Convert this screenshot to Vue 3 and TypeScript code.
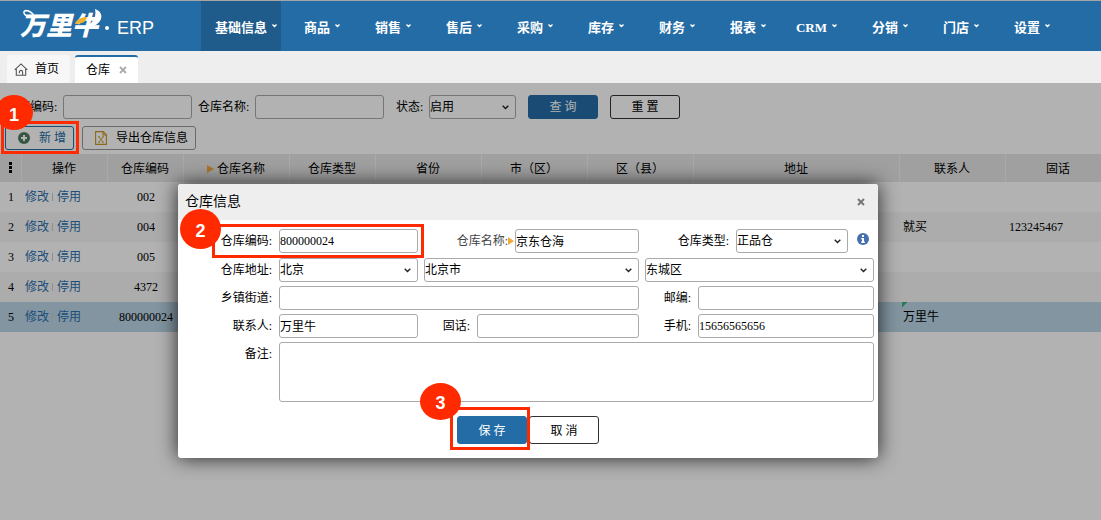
<script setup lang="ts">
import { reactive, ref } from 'vue'

interface Row {
  code: string
  contact: string
  phone: string
}

const menu = ['基础信息', '商品', '销售', '售后', '采购', '库存', '财务', '报表', 'CRM', '分销', '门店', '设置']
const columns = ['操作', '仓库编码', '仓库名称', '仓库类型', '省份', '市（区）', '区（县）', '地址', '联系人', '固话']
const rows: Row[] = [
  { code: '002', contact: '', phone: '' },
  { code: '004', contact: '就买', phone: '123245467' },
  { code: '005', contact: '', phone: '' },
  { code: '4372', contact: '', phone: '' },
  { code: '800000024', contact: '万里牛', phone: '' },
]
const selected = ref(4)
const filter = reactive({ code: '', name: '', status: '启用' })
const form = reactive({
  code: '800000024',
  name: '京东仓海',
  type: '正品仓',
  province: '北京',
  city: '北京市',
  district: '东城区',
  street: '',
  zip: '',
  contact: '万里牛',
  phone: '',
  mobile: '15656565656',
  note: '',
})
</script>

<template>
  <div class="app">
    <header class="topbar">
      <a class="logo" href="#">
        <span class="brand">万里牛</span>
        <svg class="swoosh" width="90" height="32" viewBox="0 0 90 32" aria-hidden="true">
          <path d="M14 7C11 1 3 0 4 4c1 3 5 4 9 4" fill="none" stroke="#fff" stroke-width="1.6" />
          <path d="M75 0c9 3 9 13-3 18-4 1-7 1-9 0 9-2 14-9 12-18z" fill="#fff" />
          <path d="M55 15c2-5 6-7 12-7-1 5-5 7-12 7z" fill="#efb02e" />
        </svg>
        <span class="dot"></span>
        <span class="product">ERP</span>
      </a>
      <nav class="menu">
        <a v-for="(item, i) in menu" :key="item" href="#" class="menu-item" :class="{ active: i === 0 }">
          {{ item }}
          <svg width="5" height="4" viewBox="0 0 5 4" aria-hidden="true">
            <path d="M.5.5l2 2 2-2" fill="none" stroke="#fff" stroke-width="1.4" />
          </svg>
        </a>
      </nav>
    </header>

    <div class="tabs">
      <button type="button" class="tab home">
        <svg width="14" height="13" viewBox="0 0 14 13" fill="none" stroke="#555" stroke-width="1.1" aria-hidden="true">
          <path d="M.7 6.9L7 .9l6.3 6M2.3 5.9v6.3h9.4V5.9M5.4 10.2V9a1.6 1.6 0 0 1 3.2 0v3" />
        </svg>
        首页
      </button>
      <button type="button" class="tab current">
        仓库
        <svg width="8" height="8" viewBox="0 0 8 8" aria-hidden="true">
          <path d="M1 1l6 6M7 1L1 7" stroke="#aaa" stroke-width="1.8" />
        </svg>
      </button>
    </div>

    <main class="main">
      <form class="filters" @submit.prevent>
        <label class="flabel" for="f-code">仓库编码:</label>
        <input id="f-code" v-model="filter.code" class="field w129" type="text" />
        <label class="flabel" for="f-name">仓库名称:</label>
        <input id="f-name" v-model="filter.name" class="field w129" type="text" />
        <label class="flabel status" for="f-status">状态:</label>
        <span class="select w87">
          <select id="f-status" v-model="filter.status" class="field"><option>启用</option></select>
          <svg width="7" height="5" viewBox="0 0 7 5"><path d="M.7.7l2.8 2.8L6.3.7" /></svg>
        </span>
        <button type="submit" class="btn primary">查 询</button>
        <button type="reset" class="btn">重 置</button>
      </form>

      <div class="tools">
        <button type="button" class="tool add">
          <svg width="12" height="12" viewBox="0 0 12 12" aria-hidden="true">
            <circle cx="6" cy="6" r="6" fill="#4f7d60" />
            <path d="M6 3v6M3 6h6" stroke="#fff" stroke-width="2" />
          </svg>
          新 增
        </button>
        <button type="button" class="tool export">
          <svg width="12" height="14" viewBox="0 0 12 14" fill="none" stroke="#c99422" aria-hidden="true">
            <path d="M.6.6h7.6l3.2 3.2v9.6H.6zM8 .6V4h3.4" stroke-width="1.1" />
            <path d="M4 6l4 5M8 6l-4 5M3 5.8h2M7 5.8h2M3 11.2h2M7 11.2h2" stroke-width=".9" />
          </svg>
          导出仓库信息
        </button>
      </div>

      <div class="grid">
        <table>
          <colgroup>
            <col class="c22" /><col class="c86" /><col class="c76" /><col class="c106" /><col class="c86" />
            <col class="c106" /><col class="c106" /><col class="c106" /><col class="c206" /><col class="c106" /><col />
          </colgroup>
          <thead>
            <tr>
              <th>
                <svg class="dots" width="3" height="11" viewBox="0 0 3 11" aria-hidden="true">
                  <path d="M0 0h3v3H0zM0 4h3v3H0zM0 8h3v3H0z" />
                </svg>
              </th>
              <th v-for="(c, i) in columns" :key="c"><i v-if="i === 2" class="marker"></i>{{ c }}</th>
            </tr>
          </thead>
          <tbody>
            <tr v-for="(r, i) in rows" :key="r.code" :class="{ selected: i === selected }" @click="selected = i">
              <td>{{ i + 1 }}</td>
              <td class="ops"><a href="#">修改</a><i></i><a href="#">停用</a></td>
              <td>{{ r.code }}</td>
              <td></td><td></td><td></td><td></td><td></td><td></td>
              <td class="left" :class="{ edited: i === 4 }">{{ r.contact }}</td>
              <td class="left">{{ r.phone }}</td>
            </tr>
          </tbody>
        </table>
      </div>

      <div class="backdrop"></div>

      <section class="dialog" role="dialog" aria-labelledby="dlg-title">
        <div class="dialog-head">
          <h2 id="dlg-title">仓库信息</h2>
          <button type="button" class="close" aria-label="关闭">
            <svg width="8" height="8" viewBox="0 0 8 8"><path d="M1 1l6 6M7 1L1 7" stroke="#777" stroke-width="2" /></svg>
          </button>
        </div>
        <form class="dialog-body" @submit.prevent>
          <div class="row">
            <label class="l101" for="d-code">仓库编码:</label>
            <input id="d-code" v-model="form.code" class="field w139" type="text" />
            <label class="l97 required" for="d-name">仓库名称:<i class="marker"></i></label>
            <input id="d-name" v-model="form.name" class="field w124" type="text" />
            <label class="l97" for="d-type">仓库类型:</label>
            <span class="select w112">
              <select id="d-type" v-model="form.type" class="field"><option>正品仓</option></select>
              <svg width="7" height="5" viewBox="0 0 7 5"><path d="M.7.7l2.8 2.8L6.3.7" /></svg>
            </span>
            <svg class="info" width="12" height="12" viewBox="0 0 12 12" aria-hidden="true">
              <circle cx="6" cy="6" r="6" fill="#466fae" />
              <path d="M5 2h2v2H5zM4.2 5H7v3.6h.8V10H4.2V8.6H5V6.2h-.8z" fill="#fff" />
            </svg>
          </div>
          <div class="row address">
            <label class="l101" for="d-prov">仓库地址:</label>
            <span class="select w139">
              <select id="d-prov" v-model="form.province" class="field"><option>北京</option></select>
              <svg width="7" height="5" viewBox="0 0 7 5"><path d="M.7.7l2.8 2.8L6.3.7" /></svg>
            </span>
            <span class="select w215">
              <select v-model="form.city" class="field" aria-label="市"><option>北京市</option></select>
              <svg width="7" height="5" viewBox="0 0 7 5"><path d="M.7.7l2.8 2.8L6.3.7" /></svg>
            </span>
            <span class="select grow">
              <select v-model="form.district" class="field" aria-label="区"><option>东城区</option></select>
              <svg width="7" height="5" viewBox="0 0 7 5"><path d="M.7.7l2.8 2.8L6.3.7" /></svg>
            </span>
          </div>
          <div class="row">
            <label class="l101" for="d-street">乡镇街道:</label>
            <input id="d-street" v-model="form.street" class="field w360" type="text" />
            <label class="l59" for="d-zip">邮编:</label>
            <input id="d-zip" v-model="form.zip" class="field grow" type="text" />
          </div>
          <div class="row">
            <label class="l101" for="d-contact">联系人:</label>
            <input id="d-contact" v-model="form.contact" class="field w139" type="text" />
            <label class="l59" for="d-phone">固话:</label>
            <input id="d-phone" v-model="form.phone" class="field w162" type="text" />
            <label class="l59" for="d-mobile">手机:</label>
            <input id="d-mobile" v-model="form.mobile" class="field grow" type="text" />
          </div>
          <div class="row">
            <label class="l101" for="d-note">备注:</label>
            <textarea id="d-note" v-model="form.note" class="field note grow"></textarea>
          </div>
          <div class="actions">
            <button type="submit" class="btn primary">保 存</button>
            <button type="button" class="btn">取 消</button>
          </div>
        </form>
        <span class="frame frame-code"></span>
        <span class="frame frame-save"></span>
        <span class="step step-2">2</span>
        <span class="step step-3">3</span>
      </section>

      <span class="frame frame-add"></span>
      <span class="step step-1">1</span>
    </main>
  </div>
</template>

<style>
body {
  margin: 0;
}
</style>

<style scoped>
.app {
  display: flex;
  flex-direction: column;
  min-height: 100vh;
  overflow: hidden;
  font: 12px/16px "Liberation Serif", "Noto Sans CJK SC", serif;
  color: #000;
}
.app * {
  box-sizing: border-box;
}
button, input, select, textarea {
  margin: 0;
  font: inherit;
  color: inherit;
}
a {
  text-decoration: none;
}
.topbar {
  display: flex;
  height: 51px;
  border-top: 1px solid #a5a5a5;
  background: #246ca6;
}
.logo {
  position: relative;
  display: flex;
  align-items: center;
  flex: none;
  width: 201px;
  padding-left: 20px;
  color: #fff;
}
.brand {
  width: 84px;
  padding-bottom: 4px;
  font: italic 900 26px/30px "Noto Sans CJK SC", sans-serif;
  white-space: nowrap;
}
.swoosh {
  position: absolute;
  left: 20px;
  top: 8px;
}
.dot {
  width: 4px;
  height: 4px;
  margin: 4px 8px 0 1px;
  border-radius: 50%;
  background: #fff;
}
.product {
  padding-top: 4px;
  font: 18px/20px "Liberation Sans", sans-serif;
}
.menu {
  display: flex;
}
.menu-item {
  display: flex;
  flex: none;
  align-items: center;
  justify-content: flex-end;
  gap: 5px;
  width: 71px;
  padding: 3px 12px 0 0;
  font-size: 13px;
  font-weight: bold;
  color: #fff;
}
.menu-item svg {
  margin-bottom: 4px;
}
.menu-item.active {
  width: 80px;
  padding-right: 4px;
  background: #1f5c8c;
}
.tabs {
  display: flex;
  gap: 5px;
  height: 32px;
  padding: 4px 7px 0;
  background: #eee;
}
.tab {
  display: flex;
  align-items: center;
  width: 63px;
  padding: 0 7px;
  border: 0;
  border-radius: 3px 3px 0 0;
  background: #f7f7f7;
  gap: 7px;
  white-space: nowrap;
}
.tab.current {
  padding: 0 10px 0 11px;
  gap: 9px;
  border-top: 2px solid #246ca6;
  background: #fff;
}
.tab svg {
  flex: none;
}
.main {
  position: relative;
  flex: 1;
  padding-top: 12px;
  background: #fff;
}
.filters {
  display: flex;
  align-items: center;
  padding-left: 6px;
}
.flabel {
  width: 57px;
  flex: none;
}
.flabel.status {
  width: 33px;
}
.field {
  display: block;
  height: 24px;
  padding: 0;
  border: 1px solid #aaa;
  border-radius: 3px;
  background: #fff;
  outline: 0;
}
.filters .field + .flabel {
  margin-left: 6px;
}
.filters .field + .flabel.status {
  margin-left: 12px;
}
.select {
  position: relative;
  display: block;
}
.select select {
  width: 100%;
  appearance: none;
}
.select svg {
  position: absolute;
  right: 7px;
  top: 10px;
  fill: none;
  stroke: #222;
  stroke-width: 1.4;
  pointer-events: none;
}
.btn {
  width: 70px;
  height: 24px;
  padding: 0;
  border: 1px solid #333;
  border-radius: 3px;
  background: #fff;
}
.btn.primary {
  border-color: #246ca6;
  background: #246ca6;
  color: #fff;
}
.filters .btn {
  margin-left: 12px;
}
.tools {
  display: flex;
  gap: 8px;
  padding: 7px 5px 4px;
}
.tool {
  display: flex;
  align-items: center;
  height: 24px;
  padding: 0 7px 0 12px;
  border: 1px solid #999;
  border-radius: 3px;
  background: #fff;
  gap: 9px;
}
.tool.add {
  border-color: #246ca6;
  color: #246ca6;
}
.w129 { width: 129px; }
.w87 { width: 87px; }
.w139 { width: 139px; }
.w124 { width: 124px; }
.w112 { width: 112px; }
.w215 { width: 215px; }
.w360 { width: 360px; }
.w162 { width: 162px; }
.grow { flex: 1; min-width: 0; }
.grid {
  overflow: hidden;
}
table {
  width: 100%;
  min-width: 1112px;
  border-collapse: collapse;
  table-layout: fixed;
}
.c22 { width: 22px; }
.c86 { width: 86px; }
.c76 { width: 76px; }
.c106 { width: 106px; }
.c206 { width: 206px; }
th {
  height: 28px;
  padding: 2px 2px 0 0;
  background: linear-gradient(to left, #f2f2f2 1px, #e6e6e6 1px);
  font-weight: normal;
}
.dots {
  display: block;
  margin: 0 auto 4px;
}
td {
  height: 30px;
  padding: 0;
  text-align: center;
}
tbody tr:nth-child(even) {
  background: #f6f6f6;
}
tbody tr.selected {
  background: #bbd6e6;
}
.marker {
  display: inline-block;
  margin-right: 3px;
  border: solid transparent;
  border-width: 4px 0 4px 7px;
  border-left-color: #f2a93b;
}
.ops {
  padding-left: 3px;
  text-align: left;
}
.ops a {
  color: #2a6fb0;
}
.ops i {
  display: inline-block;
  width: 1px;
  height: 8px;
  margin: 0 4px 0 3px;
  background: #ccc;
}
.left {
  padding-left: 3px;
  text-align: left;
}
.edited {
  background: linear-gradient(135deg, #3fae7f 4px, transparent 4px) 2px 0 no-repeat;
}
.backdrop {
  position: absolute;
  inset: 0;
  background: rgba(0, 0, 0, 0.3);
}
.dialog {
  position: absolute;
  left: 178px;
  top: 101px;
  width: 700px;
  border-radius: 3px;
  background: #fff;
  box-shadow: 0 0 20px rgba(0, 0, 0, 0.8);
}
.dialog-head {
  display: flex;
  align-items: center;
  justify-content: space-between;
  height: 36px;
  padding: 0 13px 0 7px;
  border-radius: 3px 3px 0 0;
  background: #eee;
}
h2 {
  margin: 0;
  font-size: 14px;
  font-weight: normal;
}
.close {
  display: flex;
  padding: 0;
  border: 0;
  background: none;
}
.dialog-body {
  display: flex;
  flex-direction: column;
  gap: 4px;
  padding: 9px 4px 14px 0;
}
.row {
  display: flex;
}
.row + .address {
  padding-top: 1px;
}
.address {
  gap: 6px;
}
.address label {
  margin-right: -6px;
}
.row label {
  flex: none;
  padding-right: 7px;
  line-height: 24px;
  text-align: right;
}
.row label.required {
  padding-right: 0;
  color: #444;
}
.row .marker {
  margin-right: 1px;
  border-left-width: 6px;
}
.l101 { width: 101px; }
.l97 { width: 97px; }
.l59 { width: 59px; }
.info {
  margin: 4px 0 0 9px;
}
.field.note {
  height: 60px;
  resize: none;
}
.actions {
  display: flex;
  justify-content: center;
  gap: 2px;
  padding: 10px 0 0 4px;
}
.actions .btn {
  height: 28px;
  padding-top: 2px;
}
.frame {
  position: absolute;
  border: 3px solid #ff2a00;
  pointer-events: none;
}
.frame-add {
  left: 1px;
  top: 38px;
  width: 78px;
  height: 33px;
}
.frame-code {
  left: 34px;
  top: 40px;
  width: 212px;
  height: 34px;
}
.frame-save {
  left: 272px;
  top: 223px;
  width: 80px;
  height: 43px;
}
.step {
  position: absolute;
  width: 41px;
  border-radius: 50%;
  background: #ff2a00;
  color: #fff;
  font: bold 18px/44px "Liberation Sans", sans-serif;
  text-align: center;
}
.step-1 {
  left: -5px;
  top: 12px;
  width: 38px;
  height: 35px;
  line-height: 40px;
}
.step-2 {
  left: 2px;
  top: 25px;
  height: 40px;
}
.step-3 {
  left: 242px;
  top: 199px;
  height: 37px;
  line-height: 41px;
}
</style>
